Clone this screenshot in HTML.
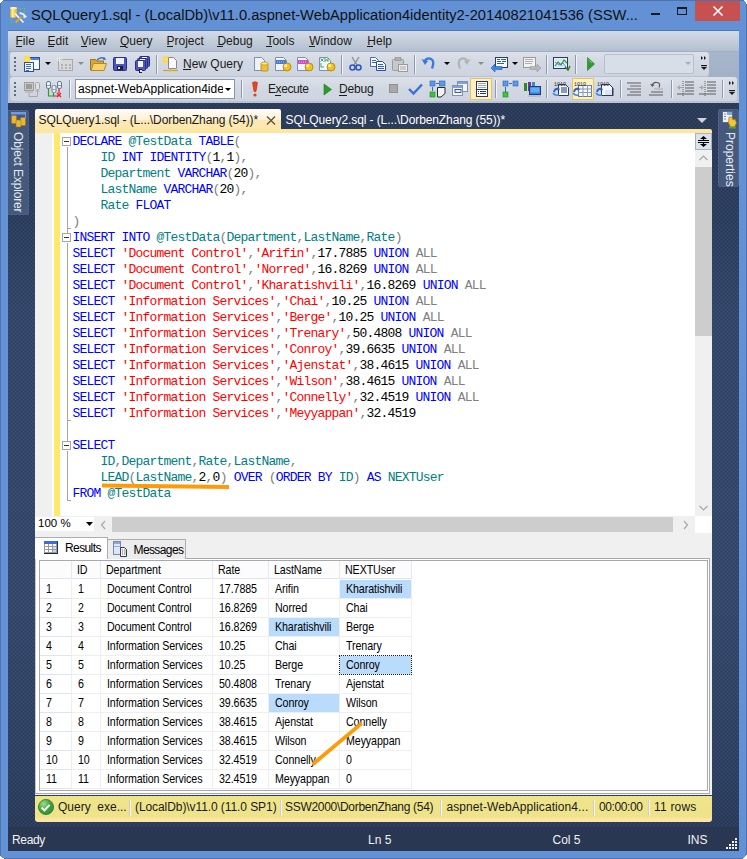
<!DOCTYPE html>
<html><head><meta charset="utf-8"><style>
*{margin:0;padding:0;box-sizing:border-box}
html,body{width:747px;height:859px;overflow:hidden;background:#fff}
body{position:relative;font-family:"Liberation Sans",sans-serif;font-size:12px;color:#000}
.a{position:absolute}
.navy{background-color:#33476B}
.tb{position:absolute;border-radius:3px;background:linear-gradient(#DCE1E9,#D3D9E3 40%,#CDD4E0);box-shadow:0 1px 0 #B9C3D2}
.sep{position:absolute;width:1px;background:#8C97AA;box-shadow:1px 0 0 #EEF1F5}
.grip{position:absolute;width:2px;height:2px;background:#5E6D85;box-shadow:0 4px 0 #5E6D85,0 8px 0 #5E6D85,0 12px 0 #5E6D85}
.txt{position:absolute;white-space:pre;line-height:1}
.code{position:absolute;left:72.5px;font-family:"Liberation Mono",monospace;font-size:13px;letter-spacing:-0.8px;white-space:pre;line-height:16px;height:16px}
.k{color:#0000FF}.i{color:#008080}.g{color:#808080}.s{color:#FF0000}.n{color:#000}
.cell{position:absolute;white-space:pre;font-size:12.4px;letter-spacing:-0.1px;line-height:19px;height:19px;padding-top:0;transform:scaleX(0.86);transform-origin:0 0}
</style></head><body>
<div class="a" style="left:0;top:0;width:747px;height:859px;background:#6391D5;box-shadow:inset 0 0 0 1px #4D72AC"></div>
<svg class="a" style="left:6px;top:3px" width="24" height="24"><defs><linearGradient id="gold" x1="0" x2="1"><stop offset="0" stop-color="#D9A21C"/><stop offset=".35" stop-color="#FFF0A8"/><stop offset="1" stop-color="#E8A90E"/></linearGradient></defs><path d="M4 5q3.5-1.5 7 0v9q-3.5 1.5-7 0z" fill="url(#gold)"/><ellipse cx="7.5" cy="5" rx="3.5" ry="1" fill="#FFF3B8"/><g fill="#5FD33A"><rect x="12" y="5" width="1" height="1"/><rect x="14" y="5" width="1" height="1"/><rect x="16" y="5" width="1" height="1"/><rect x="18" y="5" width="1" height="1"/><rect x="18" y="7" width="1" height="1"/><rect x="18" y="9" width="1" height="1"/><rect x="5" y="15" width="1" height="1"/><rect x="5" y="17" width="1" height="1"/><rect x="5" y="19" width="1" height="1"/><rect x="7" y="19" width="1" height="1"/></g><path d="M9 10.5l8.5 9" stroke="#F4F6FA" stroke-width="1.6"/><path d="M9.5 19.5l6-5.5" stroke="#E9A817" stroke-width="1.8"/><path d="M13.5 10.5q3-1 6 3l-2 1" stroke="#E8ECF2" stroke-width="2" fill="none"/></svg>
<div class="txt" style="left:31px;top:8px;font-size:14.7px;color:#111">SQLQuery1.sql - (LocalDb)\v11.0.aspnet-WebApplication4identity2-20140821041536 (SSW...</div>
<div class="a" style="left:651px;top:13px;width:9px;height:2px;background:#1A1A1A"></div>
<div class="a" style="left:677px;top:7px;width:10px;height:8px;border:1px solid #1A1A1A;border-top-width:2px"></div>
<div class="a" style="left:695px;top:1px;width:45px;height:20px;background:#C75050"></div>
<svg class="a" style="left:711px;top:5px" width="14" height="12"><path d="M2.5 1.5l9 9M11.5 1.5l-9 9" stroke="#fff" stroke-width="1.6"/></svg>
<div class="a" style="left:8px;top:30px;width:731px;height:74px;background:linear-gradient(#ADBACD 0,#A3B1C7 60%,#B9C3D2 90%);border-top:1px solid #4A78C0"></div>
<div class="a" style="left:8px;top:31px;width:731px;height:21px;background:linear-gradient(#D4DBE5,#B3BFD0);border-bottom:1px solid #A3B0C4"></div>
<div class="txt" style="left:15.5px;top:35px;font-size:12px;color:#1B1B1B">File</div>
<div class="a" style="left:15.5px;top:46px;width:6px;height:1px;background:#1B1B1B"></div>
<div class="txt" style="left:47.6px;top:35px;font-size:12px;color:#1B1B1B">Edit</div>
<div class="a" style="left:47.6px;top:46px;width:6px;height:1px;background:#1B1B1B"></div>
<div class="txt" style="left:80.8px;top:35px;font-size:12px;color:#1B1B1B">View</div>
<div class="a" style="left:80.8px;top:46px;width:6px;height:1px;background:#1B1B1B"></div>
<div class="txt" style="left:119.9px;top:35px;font-size:12px;color:#1B1B1B">Query</div>
<div class="a" style="left:119.9px;top:46px;width:6px;height:1px;background:#1B1B1B"></div>
<div class="txt" style="left:166.5px;top:35px;font-size:12px;color:#1B1B1B">Project</div>
<div class="a" style="left:166.5px;top:46px;width:6px;height:1px;background:#1B1B1B"></div>
<div class="txt" style="left:217.4px;top:35px;font-size:12px;color:#1B1B1B">Debug</div>
<div class="a" style="left:217.4px;top:46px;width:6px;height:1px;background:#1B1B1B"></div>
<div class="txt" style="left:266.4px;top:35px;font-size:12px;color:#1B1B1B">Tools</div>
<div class="a" style="left:266.4px;top:46px;width:6px;height:1px;background:#1B1B1B"></div>
<div class="txt" style="left:309.2px;top:35px;font-size:12px;color:#1B1B1B">Window</div>
<div class="a" style="left:309.2px;top:46px;width:6px;height:1px;background:#1B1B1B"></div>
<div class="txt" style="left:367.3px;top:35px;font-size:12px;color:#1B1B1B">Help</div>
<div class="a" style="left:367.3px;top:46px;width:6px;height:1px;background:#1B1B1B"></div>
<div class="tb" style="left:10px;top:52px;width:699px;height:24px"></div>
<div class="grip" style="left:14px;top:57px"></div>
<div class="tb" style="left:10px;top:77px;width:727px;height:24px"></div>
<div class="grip" style="left:14px;top:82px"></div>
<svg class="a" style="left:0;top:0" width="747" height="105"><rect x="26.5" y="57.5" width="13" height="12" fill="#F4F8FF" stroke="#2E4F95"/><rect x="27" y="58" width="12" height="2" fill="#4C84DD"/><circle cx="27" cy="59" r="3.2" fill="#FFD530"/><path d="M23 59h8M27 55v8M24 56l6 6M30 56l-6 6" stroke="#FFE36A" stroke-width=".9"/><rect x="24.5" y="62.5" width="9" height="9" fill="#F2F6FD" stroke="#2E4F95"/><path d="M26 64.5h5M26 66.5h5M26 68.5h5M26 70.5h3" stroke="#3E6CCB"/><path d="M45 62h6l-3 3z" fill="#000"/><rect x="58.5" y="59.5" width="14" height="11" fill="#D8D8D8" stroke="#A9A9A9"/><path d="M61 65h2M65 65h2M69 65h2M61 68h2M65 68h2M69 68h2" stroke="#8C8C8C"/><path d="M56 59h7M59.5 55.5v7M57 57l5 5M62 57l-5 5" stroke="#E6E6E6" stroke-width=".9"/><path d="M78 62h6l-3 3z" fill="#8C8C8C"/><path d="M90.5 59.5h5l1 1.5h7v9h-13z" fill="#D7A63A" stroke="#9C7420"/><path d="M91 70.5l2.5-7h13l-2.5 7z" fill="#F7D36A" stroke="#B08A2A"/><path d="M97 60q4-4 8-1" stroke="#3A6BC8" stroke-width="1.3" fill="none"/><path d="M104 57l2 2.5-3 .8z" fill="#3A6BC8"/><rect x="113.5" y="57.5" width="13" height="13" rx="1" fill="#4D56BE" stroke="#2B2F80"/><rect x="116" y="58" width="8" height="6" fill="#F1F3FA"/><rect x="117" y="66" width="6" height="4" fill="#1E1E3A"/><rect x="118" y="67" width="2" height="2" fill="#E8E8F0"/><rect x="139.5" y="56.5" width="10" height="10" rx="1" fill="#4D56BE" stroke="#2B2F80"/><rect x="142" y="57" width="5" height="6" fill="#F1F3FA"/><rect x="143" y="65" width="3" height="4" fill="#1E1E3A"/><rect x="144" y="66" width="2" height="2" fill="#E8E8F0"/><rect x="137.5" y="58.5" width="10" height="10" rx="1" fill="#4D56BE" stroke="#2B2F80"/><rect x="140" y="59" width="5" height="6" fill="#F1F3FA"/><rect x="141" y="67" width="3" height="4" fill="#1E1E3A"/><rect x="142" y="68" width="2" height="2" fill="#E8E8F0"/><rect x="135.5" y="60.5" width="10" height="10" rx="1" fill="#4D56BE" stroke="#2B2F80"/><rect x="138" y="61" width="5" height="6" fill="#F1F3FA"/><rect x="139" y="69" width="3" height="4" fill="#1E1E3A"/><rect x="140" y="70" width="2" height="2" fill="#E8E8F0"/><rect x="156" y="55" width="1" height="19" fill="#8E99AC"/><rect x="157" y="55" width="1" height="19" fill="#F2F4F8"/><circle cx="166" cy="59.5" r="3.3" fill="#FFCF2E"/><path d="M161.5 59.5h9M166 55v9M163 56.5l6 6M169 56.5l-6 6" stroke="#FFE27A" stroke-width=".9"/><path d="M168.5 57.5h5l3 3v8h-8z" fill="#FAFAFA" stroke="#8A8A8A"/><path d="M163 70.5h15" stroke="#D4A020" stroke-width="1.2"/><path d="M170.5 68v3" stroke="#D4A020"/><circle cx="170.5" cy="70.5" r="1.3" fill="#E8B830"/><path d="M254.5 57.5h7l3 3v10h-10z" fill="#EEF2FA" stroke="#7F8FB0"/><rect x="261" y="63" width="7" height="8" rx="1" fill="#F0C030" stroke="#B08618" stroke-width=".8"/><ellipse cx="264.5" cy="63.5" rx="3.5" ry="1.5" fill="#FFE680" stroke="#B08618" stroke-width=".6"/><path d="M275.5 57.5h8l3 3v10h-11z" fill="#F2F5FB" stroke="#7F8FB0"/><rect x="276" y="60" width="10" height="4" fill="#2A63C6" opacity=".85"/><path d="M277 62h8" stroke="#fff" stroke-width=".6" stroke-dasharray="1 1"/><circle cx="287" cy="67" r="4" fill="#F2C21A" stroke="#A8810A" stroke-width=".8"/><circle cx="285.8" cy="65.7" r="1.6" fill="#FFF2A0"/><path d="M297.5 57.5h8l3 3v10h-11z" fill="#F2F5FB" stroke="#7F8FB0"/><rect x="298" y="60" width="10" height="4" fill="#C030B8" opacity=".85"/><path d="M299 62h8" stroke="#fff" stroke-width=".6" stroke-dasharray="1 1"/><circle cx="309" cy="67" r="4" fill="#F2C21A" stroke="#A8810A" stroke-width=".8"/><circle cx="307.8" cy="65.7" r="1.6" fill="#FFF2A0"/><path d="M319.5 57.5h8l3 3v10h-11z" fill="#F2F5FB" stroke="#7F8FB0"/><path d="M320.5 58.5l3 3M323.5 58.5l-3 3M325 58v3.5l1.5-2 1.5 2V58M321 63v4h3" stroke="#2AA050" stroke-width=".9" fill="none"/><circle cx="331" cy="67" r="4" fill="#F2C21A" stroke="#A8810A" stroke-width=".8"/><circle cx="329.8" cy="65.7" r="1.6" fill="#FFF2A0"/><rect x="341" y="55" width="1" height="19" fill="#8E99AC"/><rect x="342" y="55" width="1" height="19" fill="#F2F4F8"/><path d="M352 57l5 8M359 57l-5 8" stroke="#8F8F8F" stroke-width="1.4"/><circle cx="352.5" cy="67.5" r="2.5" fill="none" stroke="#2C55C8" stroke-width="1.6"/><circle cx="358.5" cy="67.5" r="2.5" fill="none" stroke="#2C55C8" stroke-width="1.6"/><path d="M370.5 57.5h5l3 3v6h-8z" fill="#F8FAFE" stroke="#4C6AB8"/><path d="M372 60.5h4M372 62.5h4" stroke="#3A62C0"/><path d="M376.5 61.5h6l3 3v6h-9z" fill="#F8FAFE" stroke="#2E4F95"/><path d="M378 64.5h5M378 66.5h6M378 68.5h6" stroke="#2E5CC8"/><rect x="392.5" y="59.5" width="11" height="11" rx="1" fill="#C8C8C8" stroke="#9A9A9A"/><rect x="395" y="57.5" width="6" height="3" fill="#B0B0B0" stroke="#8C8C8C" stroke-width=".6"/><rect x="398.5" y="64.5" width="9" height="7" fill="#EDEDED" stroke="#9A9A9A"/><path d="M400 67h6M400 69h6" stroke="#A8A8A8"/><rect x="414" y="55" width="1" height="19" fill="#8E99AC"/><rect x="415" y="55" width="1" height="19" fill="#F2F4F8"/><path d="M424 62q3-5 7-3t1 9.5" stroke="#3C78DC" stroke-width="2.3" fill="none"/><path d="M421.5 59l3.5 6 3-4z" fill="#3C78DC"/><path d="M444 62h6l-3 3z" fill="#000"/><path d="M468 62q-3-5-7-3t-1 9.5" stroke="#B4B4B4" stroke-width="2.3" fill="none"/><path d="M470.5 59l-3.5 6-3-4z" fill="#B4B4B4"/><path d="M478 62h6l-3 3z" fill="#8C8C8C"/><rect x="495.5" y="57.5" width="12" height="10" fill="#FAFBFD" stroke="#2A3A6A"/><path d="M497 59.5h3M501 59.5h5M497 61.5h4M502 61.5h4M497 63.5h7" stroke="#2A5CC8"/><path d="M491 68l4-4v2.5h7v3h-7v2.5z" fill="#3A8AE0" stroke="#2458B0" stroke-width=".6"/><path d="M512 62h6l-3 3z" fill="#000"/><rect x="523.5" y="57.5" width="12" height="10" fill="#F2F2F2" stroke="#9A9A9A"/><path d="M525 59.5h8M525 61.5h8M525 63.5h7" stroke="#B0B0B0"/><path d="M541 68l-4-4v2.5h-7v3h7v2.5z" fill="#B8B8B8" stroke="#9A9A9A" stroke-width=".6"/><rect x="546" y="55" width="1" height="19" fill="#8E99AC"/><rect x="547" y="55" width="1" height="19" fill="#F2F4F8"/><rect x="553.5" y="57.5" width="14" height="11" fill="#E8F2FA" stroke="#2A3A6A"/><path d="M555 60h11M555 63h11M555 66h11" stroke="#B6C8E0" stroke-width=".6"/><path d="M555 66l3-4 3 3 3-5 3 3" stroke="#3A9A30" stroke-width="1.2" fill="none"/><path d="M555 62l4 3 4-2 3 4" stroke="#4A7CE0" stroke-width=".9" fill="none"/><path d="M565 67l3 3 2-4" stroke="#2A8020" stroke-width="1.5" fill="none"/><rect x="575" y="55" width="1" height="19" fill="#8E99AC"/><rect x="576" y="55" width="1" height="19" fill="#F2F4F8"/><path d="M587.5 57.5l7 6.5-7 6.5z" fill="#2E9A2E" stroke="#1E7A1E" stroke-width=".6"/><path d="M588.5 60l3.5 3" stroke="#7ED07E"/><rect x="604.5" y="54.5" width="89" height="19" rx="1.5" fill="#D8DEE7" stroke="#B7C0CD"/><path d="M685 62h6l-3 3z" fill="#A3ABB8"/><path d="M701 56l2 2-2 2zM704 56l2 2-2 2z" fill="#1A1A1A"/><rect x="701" y="65" width="6" height="1.2" fill="#1A1A1A"/><path d="M701 67h6l-3 3z" fill="#1A1A1A"/><rect x="24.5" y="82.5" width="9" height="8" fill="#C9C9C9" stroke="#A0A0A0"/><rect x="26" y="84" width="6" height="5" fill="#9C9C9C"/><rect x="25" y="91" width="8" height="2" fill="#BDBDBD"/><rect x="35.5" y="82.5" width="4" height="7" rx="1" fill="#E0E0E0" stroke="#A8A8A8"/><path d="M29 93v3.5h8.5v-6" stroke="#A8A8A8" fill="none"/><path d="M35.5 92l2-2 2 2" stroke="#A8A8A8" fill="none"/><rect x="46.5" y="81.5" width="4" height="7" rx="1.5" fill="#EEF2F8" stroke="#6C7A90"/><rect x="47" y="85" width="3" height="1" fill="#8A9ABA"/><rect x="52.0" y="85.5" width="4" height="7" rx="1.5" fill="#EEF2F8" stroke="#6C7A90"/><rect x="52.5" y="89" width="3" height="1" fill="#8A9ABA"/><rect x="57.5" y="81.5" width="4" height="7" rx="1.5" fill="#EEF2F8" stroke="#6C7A90"/><rect x="58" y="85" width="3" height="1" fill="#8A9ABA"/><path d="M48.5 89v7h5v-3" stroke="#2AA020" stroke-width="1.2" fill="none"/><path d="M53.5 96h4M59 89v4" stroke="#E02020" stroke-width="1.2"/><path d="M57 93l4 4M61 93l-4 4" stroke="#F02020" stroke-width="1.4"/><rect x="69" y="80" width="1" height="18" fill="#8E99AC"/><rect x="70" y="80" width="1" height="18" fill="#F2F4F8"/><rect x="75.5" y="79.5" width="159" height="19" fill="#FFFFFF" stroke="#8995AB"/><path d="M225 88h6l-3 3z" fill="#000"/><rect x="241" y="80" width="1" height="18" fill="#8E99AC"/><rect x="242" y="80" width="1" height="18" fill="#F2F4F8"/><path d="M252.5 82.5q2.5-1.5 5 0l-1.5 9h-2z" fill="#E8461C" stroke="#B82A10" stroke-width=".6"/><circle cx="255" cy="95" r="1.6" fill="#E0401A"/><path d="M324 84l7.5 5.5-7.5 5.5z" fill="#2E9A2E" stroke="#1E7A1E" stroke-width=".6"/><rect x="389.5" y="84.5" width="8" height="8" fill="#A9A9A9" stroke="#909090"/><path d="M409 89l4.5 4.5 8.5-9" stroke="#3C6ED6" stroke-width="2.4" fill="none"/><rect x="430" y="81" width="5" height="5" fill="#5A9AE8" stroke="#2A62B8" stroke-width=".6"/><rect x="439.5" y="81" width="5.5" height="5" fill="#5A9AE8" stroke="#2A62B8" stroke-width=".6"/><path d="M436 83.5h3M432.5 87v4" stroke="#3A6AB8"/><rect x="430" y="92" width="5" height="5" fill="#3CC23C" stroke="#1E8A1E" stroke-width=".6"/><path d="M437.5 87.5h7.5v6l-4 3.5h-3.5z" fill="#F4F4F4" stroke="#2A2A2A"/><rect x="457.5" y="81.5" width="10" height="10" fill="#F2F5FA" stroke="#8092B8"/><rect x="458" y="82" width="9" height="2" fill="#7FA3DA"/><rect x="452.5" y="85.5" width="10" height="10" fill="#F2F5FA" stroke="#8092B8"/><rect x="453" y="86" width="9" height="2" fill="#7FA3DA"/><rect x="455" y="89.5" width="6" height="3" fill="#E6ECF6" stroke="#2A3A6A" stroke-width=".8"/><rect x="470.5" y="78.5" width="21" height="21" fill="#FFF0C4" stroke="#E5C466"/><rect x="476.5" y="81.5" width="11" height="15" fill="#FAFBFD" stroke="#2A3A5A"/><path d="M478 83.5h8M478 85.5h8M478 87.5h8" stroke="#9AA6BC"/><path d="M477 89.5h10" stroke="#2A3A5A"/><path d="M478 91.5h1M478 93.5h1M480 91.5h6M480 93.5h6" stroke="#2A3A5A"/><rect x="495" y="80" width="1" height="18" fill="#8E99AC"/><rect x="496" y="80" width="1" height="18" fill="#F2F4F8"/><rect x="503" y="81" width="5" height="5" fill="#5A9AE8" stroke="#2A62B8" stroke-width=".6"/><rect x="513" y="81" width="5" height="5" fill="#5A9AE8" stroke="#2A62B8" stroke-width=".6"/><path d="M509 83.5h3M505.5 87v5" stroke="#3A6AB8"/><rect x="503" y="92" width="5" height="5" fill="#3CC23C" stroke="#1E8A1E" stroke-width=".6"/><rect x="524" y="83" width="3" height="8" fill="#2A8A2A"/><rect x="528" y="82" width="3" height="9" fill="#6A3A9A"/><rect x="532" y="82" width="3" height="9" fill="#3A8AC8"/><rect x="529.5" y="86.5" width="11" height="8" fill="#3C7AE0" stroke="#2A3A6A"/><rect x="530.5" y="87.5" width="9" height="5" fill="#5AB0F8"/><rect x="528" y="95" width="13" height="2" fill="#B8C0D0"/><rect x="546" y="80" width="1" height="18" fill="#8E99AC"/><rect x="547" y="80" width="1" height="18" fill="#F2F4F8"/><path d="M558.5 84.5h7l3 3v8h-10z" fill="#F6F8FC" stroke="#2A3A6A"/><path d="M561 88h6M561 90h6M561 92h6" stroke="#2A3A6A"/><text x="554" y="86" font-family="Liberation Mono" font-size="5" fill="#2A2A2A">1010</text><path d="M554 92q1-4 5-3" stroke="#2A62C8" stroke-width="2" fill="none"/><path d="M558 87l2 2.5-3 1z" fill="#2A62C8"/><path d="M553 93q2 3 6 2" stroke="#3A8AE0" stroke-width="1.6" fill="none"/><rect x="572.5" y="78.5" width="21" height="21" fill="#FFF0C4" stroke="#E5C466"/><rect x="578.5" y="85.5" width="13" height="11" fill="#F6F8FC" stroke="#6A7A9A"/><path d="M578 89h14M578 92.5h14M583 85v12M587.5 85v12" stroke="#8A9ABA"/><text x="574" y="86" font-family="Liberation Mono" font-size="5" fill="#2A2A2A">1010</text><path d="M574 92q1-4 5-3" stroke="#2A62C8" stroke-width="2" fill="none"/><path d="M578 87l2 2.5-3 1z" fill="#2A62C8"/><path d="M573 93q2 3 6 2" stroke="#3A8AE0" stroke-width="1.6" fill="none"/><path d="M601.5 84.5h8l3 3v8h-11z" fill="#F6F8FC" stroke="#2A3A6A"/><path d="M609 84l4 4v8" fill="none" stroke="#2A3A6A"/><rect x="605" y="90" width="7" height="5" fill="#DDE4F0"/><text x="597" y="86" font-family="Liberation Mono" font-size="5" fill="#2A2A2A">1010</text><path d="M597 92q1-4 5-3" stroke="#2A62C8" stroke-width="2" fill="none"/><path d="M601 87l2 2.5-3 1z" fill="#2A62C8"/><path d="M596 93q2 3 6 2" stroke="#3A8AE0" stroke-width="1.6" fill="none"/><rect x="620" y="80" width="1" height="18" fill="#8E99AC"/><rect x="621" y="80" width="1" height="18" fill="#F2F4F8"/><path d="M627 83h14M630 86h11M627 89h14M630 92h11M627 95h14" stroke="#5C5C5C"/><path d="M630 86h11M630 89h8" stroke="#A8A8A8"/><path d="M652 86q1-4 5-3.5t2 5" stroke="#5C5C5C" stroke-width="1.2" fill="none"/><path d="M650 84l2.5 3 2-2.5z" fill="#5C5C5C"/><path d="M651 92h12M649 95h14" stroke="#5C5C5C"/><path d="M654 89h9" stroke="#A8A8A8"/><rect x="671" y="80" width="1" height="18" fill="#8E99AC"/><rect x="672" y="80" width="1" height="18" fill="#F2F4F8"/><path d="M685 82h9M685 85h9M685 88h9M685 91h9M677 94h17" stroke="#5C5C5C" stroke-width="1.2"/><path d="M683 81v16" stroke="#5C5C5C" stroke-dasharray="1 1"/><path d="M677 87.5l3-2.5v5z" fill="#A8A8A8"/><path d="M679 87.5h4" stroke="#A8A8A8"/><path d="M707 82h9M707 85h9M707 88h9M707 91h9M699 94h17" stroke="#5C5C5C" stroke-width="1.2"/><path d="M705 81v16" stroke="#5C5C5C" stroke-dasharray="1 1"/><path d="M704 87.5l-3-2.5v5z" fill="#A8A8A8"/><path d="M699 87.5h3" stroke="#A8A8A8"/><rect x="722" y="80" width="1" height="18" fill="#8E99AC"/><rect x="723" y="80" width="1" height="18" fill="#F2F4F8"/><path d="M729 81l2 2-2 2zM732 81l2 2-2 2z" fill="#1A1A1A"/><rect x="729" y="90" width="6" height="1.2" fill="#1A1A1A"/><path d="M729 92h6l-3 3z" fill="#1A1A1A"/></svg>
<div class="txt" style="left:183px;top:58px;font-size:12px;color:#1B1B1B">New Query</div><div class="a" style="left:183px;top:69px;width:8px;height:1px;background:#1B1B1B"></div>
<div class="txt" style="left:78px;top:83px;font-size:12px;color:#000;width:145px;overflow:hidden">aspnet-WebApplication4ide</div>
<div class="txt" style="left:268px;top:83px;font-size:12px;color:#1B1B1B;letter-spacing:-0.4px">Execute</div><div class="a" style="left:275px;top:95px;width:6px;height:1px;background:#1B1B1B"></div>
<div class="txt" style="left:339px;top:83px;font-size:12px;color:#1B1B1B;letter-spacing:-0.2px">Debug</div><div class="a" style="left:339px;top:95px;width:8px;height:1px;background:#1B1B1B"></div>
<div class="a" style="left:8px;top:103px;width:731px;height:748px;background:linear-gradient(#2B3B59 0,#2D3F5F 16%,#34486B 29%,#35496C 68%,#2F4264 88%,#2A3A58 100%)"></div>
<svg class="a" style="left:8px;top:103px" width="731" height="748"><defs><pattern id="dots" width="4" height="4" patternUnits="userSpaceOnUse"><rect x="1" y="0" width="1" height="1" fill="#1C2740" fill-opacity=".45"/><rect x="3" y="2" width="1" height="1" fill="#1C2740" fill-opacity=".45"/><rect x="3" y="0" width="1" height="1" fill="#5A6E94" fill-opacity=".18"/><rect x="1" y="2" width="1" height="1" fill="#5A6E94" fill-opacity=".18"/></pattern></defs><rect width="731" height="748" fill="url(#dots)"/></svg>
<div class="a" style="left:8px;top:110px;width:21px;height:105px;background:#45597D;border:1px solid #4C6086;border-left:none;border-radius:0 2px 2px 0"></div>
<svg class="a" style="left:10px;top:111px" width="17" height="17"><rect x="1" y="1" width="15" height="2.5" fill="#6E9BE8"/><rect x="15" y="1" width="1" height="6" fill="#6E9BE8"/><g fill="#E7B63A" stroke="#A57A14" stroke-width=".6"><rect x="1.5" y="4.5" width="5" height="8" rx="1"/><rect x="10.5" y="6.5" width="5" height="8" rx="1"/><rect x="6" y="9" width="5" height="7" rx="1"/></g></svg>
<div class="txt" style="left:24px;top:132px;font-size:12px;letter-spacing:-0.15px;color:#E6EBF2;transform-origin:0 0;transform:rotate(90deg)">Object Explorer</div>
<div class="a" style="left:718px;top:109px;width:21px;height:78px;background:#46597D;border:1px solid #4E6288;border-radius:2px"></div>
<svg class="a" style="left:722px;top:111px" width="15" height="18"><rect x=".5" y=".5" width="10" height="11" fill="#EEF2FA" stroke="#5A6A8A"/><rect x="5" y="1" width="5" height="3" fill="#7FA8E8"/><path d="M2 3h2M2 5.5h2M2 8h2" stroke="#7A8AAA"/><path d="M7 6l3 0 1 3 2-1 1.5 4-2 4h-4l-2-4z" fill="#F5C430" stroke="#A07810" stroke-width=".6"/><rect x="7" y="15.5" width="7" height="2" fill="#4EA040"/></svg>
<div class="txt" style="left:736px;top:131.5px;font-size:12px;color:#E6EBF2;transform-origin:0 0;transform:rotate(90deg)">Properties</div>
<div class="a" style="left:35px;top:109px;width:246px;height:24px;background:linear-gradient(#FFFCF4 0,#FDF1D8 11px,#FDE8B2 11px,#FDE7AE 100%);border-radius:2px 2px 0 0"></div>
<div class="txt" style="left:38.6px;top:114px;font-size:12px;letter-spacing:-0.1px;color:#1A1A1A">SQLQuery1.sql - (L...\DorbenZhang (54))*</div>
<svg class="a" style="left:266px;top:116px" width="10" height="9"><path d="M1 0.5l8 8M9 0.5l-8 8" stroke="#5A4F3A" stroke-width="1.3"/></svg>
<div class="txt" style="left:285.6px;top:114px;font-size:12px;letter-spacing:-0.1px;color:#FFFFFF">SQLQuery2.sql - (L...\DorbenZhang (55))*</div>
<svg class="a" style="left:697px;top:118px" width="10" height="6"><path d="M0 0h10L5 5z" fill="#CDD3DE"/></svg>
<div class="a" style="left:35px;top:129px;width:677px;height:4px;background:#FDE7A0;border-radius:0 2px 0 0"></div>
<div class="a" style="left:35px;top:133px;width:677px;height:400px;background:#FFFFFF"></div>
<div class="a" style="left:35px;top:133px;width:17px;height:383px;background:#F0F0F0"></div>
<div class="a" style="left:54px;top:133px;width:6px;height:383px;background:#FFE96A"></div>
<div class="a" style="left:62px;top:137px;width:9px;height:9px;border:1px solid #A5A5A5;background:#fff"></div>
<div class="a" style="left:64px;top:141px;width:5px;height:1px;background:#333"></div>
<div class="a" style="left:67px;top:147px;width:1px;height:82px;background:#A5A5A5"></div>
<div class="a" style="left:67px;top:228px;width:4px;height:1px;background:#A5A5A5"></div>
<div class="a" style="left:67px;top:229px;width:1px;height:4px;background:#A5A5A5"></div>
<div class="a" style="left:62px;top:233px;width:9px;height:9px;border:1px solid #A5A5A5;background:#fff"></div>
<div class="a" style="left:64px;top:237px;width:5px;height:1px;background:#333"></div>
<div class="a" style="left:67px;top:243px;width:1px;height:178px;background:#A5A5A5"></div>
<div class="a" style="left:67px;top:420px;width:4px;height:1px;background:#A5A5A5"></div>
<div class="a" style="left:67px;top:421px;width:1px;height:20px;background:#A5A5A5"></div>
<div class="a" style="left:62px;top:441px;width:9px;height:9px;border:1px solid #A5A5A5;background:#fff"></div>
<div class="a" style="left:64px;top:445px;width:5px;height:1px;background:#333"></div>
<div class="a" style="left:67px;top:451px;width:1px;height:50px;background:#A5A5A5"></div>
<div class="a" style="left:67px;top:500px;width:4px;height:1px;background:#A5A5A5"></div>
<div class="code" style="top:134px"><span class="k">DECLARE </span><span class="i">@TestData </span><span class="k">TABLE</span><span class="g">(</span></div>
<div class="code" style="top:150px"><span class="n">    </span><span class="i">ID </span><span class="k">INT IDENTITY</span><span class="g">(</span><span class="n">1</span><span class="g">,</span><span class="n">1</span><span class="g">),</span></div>
<div class="code" style="top:166px"><span class="n">    </span><span class="i">Department </span><span class="k">VARCHAR</span><span class="g">(</span><span class="n">20</span><span class="g">),</span></div>
<div class="code" style="top:182px"><span class="n">    </span><span class="i">LastName </span><span class="k">VARCHAR</span><span class="g">(</span><span class="n">20</span><span class="g">),</span></div>
<div class="code" style="top:198px"><span class="n">    </span><span class="i">Rate </span><span class="k">FLOAT</span></div>
<div class="code" style="top:214px"><span class="g">)</span></div>
<div class="code" style="top:230px"><span class="k">INSERT INTO </span><span class="i">@TestData</span><span class="g">(</span><span class="i">Department</span><span class="g">,</span><span class="i">LastName</span><span class="g">,</span><span class="i">Rate</span><span class="g">)</span></div>
<div class="code" style="top:246px"><span class="k">SELECT </span><span class="s">'Document Control'</span><span class="g">,</span><span class="s">'Arifin'</span><span class="g">,</span><span class="n">17.7885</span><span class="k"> UNION </span><span class="g">ALL</span></div>
<div class="code" style="top:262px"><span class="k">SELECT </span><span class="s">'Document Control'</span><span class="g">,</span><span class="s">'Norred'</span><span class="g">,</span><span class="n">16.8269</span><span class="k"> UNION </span><span class="g">ALL</span></div>
<div class="code" style="top:278px"><span class="k">SELECT </span><span class="s">'Document Control'</span><span class="g">,</span><span class="s">'Kharatishvili'</span><span class="g">,</span><span class="n">16.8269</span><span class="k"> UNION </span><span class="g">ALL</span></div>
<div class="code" style="top:294px"><span class="k">SELECT </span><span class="s">'Information Services'</span><span class="g">,</span><span class="s">'Chai'</span><span class="g">,</span><span class="n">10.25</span><span class="k"> UNION </span><span class="g">ALL</span></div>
<div class="code" style="top:310px"><span class="k">SELECT </span><span class="s">'Information Services'</span><span class="g">,</span><span class="s">'Berge'</span><span class="g">,</span><span class="n">10.25</span><span class="k"> UNION </span><span class="g">ALL</span></div>
<div class="code" style="top:326px"><span class="k">SELECT </span><span class="s">'Information Services'</span><span class="g">,</span><span class="s">'Trenary'</span><span class="g">,</span><span class="n">50.4808</span><span class="k"> UNION </span><span class="g">ALL</span></div>
<div class="code" style="top:342px"><span class="k">SELECT </span><span class="s">'Information Services'</span><span class="g">,</span><span class="s">'Conroy'</span><span class="g">,</span><span class="n">39.6635</span><span class="k"> UNION </span><span class="g">ALL</span></div>
<div class="code" style="top:358px"><span class="k">SELECT </span><span class="s">'Information Services'</span><span class="g">,</span><span class="s">'Ajenstat'</span><span class="g">,</span><span class="n">38.4615</span><span class="k"> UNION </span><span class="g">ALL</span></div>
<div class="code" style="top:374px"><span class="k">SELECT </span><span class="s">'Information Services'</span><span class="g">,</span><span class="s">'Wilson'</span><span class="g">,</span><span class="n">38.4615</span><span class="k"> UNION </span><span class="g">ALL</span></div>
<div class="code" style="top:390px"><span class="k">SELECT </span><span class="s">'Information Services'</span><span class="g">,</span><span class="s">'Connelly'</span><span class="g">,</span><span class="n">32.4519</span><span class="k"> UNION </span><span class="g">ALL</span></div>
<div class="code" style="top:406px"><span class="k">SELECT </span><span class="s">'Information Services'</span><span class="g">,</span><span class="s">'Meyyappan'</span><span class="g">,</span><span class="n">32.4519</span></div>
<div class="code" style="top:438px"><span class="k">SELECT</span></div>
<div class="code" style="top:454px"><span class="n">    </span><span class="i">ID</span><span class="g">,</span><span class="i">Department</span><span class="g">,</span><span class="i">Rate</span><span class="g">,</span><span class="i">LastName</span><span class="g">,</span></div>
<div class="code" style="top:470px"><span class="n">    </span><span class="i">LEAD</span><span class="g">(</span><span class="i">LastName</span><span class="g">,</span><span class="n">2</span><span class="g">,</span><span class="n">0</span><span class="g">) </span><span class="k">OVER </span><span class="g">(</span><span class="k">ORDER BY </span><span class="i">ID</span><span class="g">) </span><span class="k">AS </span><span class="i">NEXTUser</span></div>
<div class="code" style="top:486px"><span class="k">FROM </span><span class="i">@TestData</span></div>
<svg class="a" style="left:98px;top:480px" width="136" height="12"><path d="M4 5.4 L131 7" stroke="#FF9A08" stroke-width="4" fill="none" stroke-linecap="butt"/></svg>
<div class="a" style="left:695px;top:133px;width:17px;height:383px;background:#F0F0F0"></div>
<div class="a" style="left:695px;top:133px;width:17px;height:17px;background:#DCE2EB;border:1px solid #A7B3C6"></div>
<svg class="a" style="left:697px;top:135px" width="13" height="13"><path d="M6.5 1L3 4h7z M6.5 12L3 9h7z" fill="#000"/><path d="M6.5 3v2M6.5 8v2" stroke="#000" stroke-width="1.2"/><path d="M1 5.5h11M1 7.5h11" stroke="#000" stroke-width="1"/></svg>
<svg class="a" style="left:698px;top:154px" width="11" height="8"><path d="M1.5 6L5.5 2L9.5 6" stroke="#A8A8A8" stroke-width="1.2" fill="none"/></svg>
<div class="a" style="left:695px;top:167px;width:17px;height:169px;background:#CDCDCD"></div>
<svg class="a" style="left:698px;top:504px" width="11" height="8"><path d="M1.5 2L5.5 6L9.5 2" stroke="#A8A8A8" stroke-width="1.2" fill="none"/></svg>
<div class="a" style="left:35px;top:516px;width:677px;height:17px;background:#F0F0F0"></div>
<div class="a" style="left:35px;top:517px;width:59px;height:14px;background:#FFFFFF"></div>
<div class="txt" style="left:38px;top:518px;font-size:11.5px;color:#000">100 %</div>
<svg class="a" style="left:86px;top:522px" width="7" height="4"><path d="M0 0h7L3.5 4z" fill="#000"/></svg>
<svg class="a" style="left:100px;top:520px" width="6" height="10"><path d="M5 1L1.5 5L5 9" stroke="#A8A8A8" stroke-width="1.2" fill="none"/></svg>
<div class="a" style="left:112px;top:517px;width:561px;height:15px;background:#CDCDCD"></div>
<svg class="a" style="left:683px;top:520px" width="6" height="10"><path d="M1 1L4.5 5L1 9" stroke="#A8A8A8" stroke-width="1.2" fill="none"/></svg>
<div class="a" style="left:695px;top:516px;width:17px;height:17px;background:#FFFFFF"></div>
<div class="a" style="left:35px;top:533px;width:677px;height:262px;background:#F0F0F0"></div>
<div class="a" style="left:35px;top:558px;width:675px;height:236px;background:#FFFFFF;border:1px solid #A7A9AE;border-left-color:#C8C8C8"></div>
<div class="a" style="left:107px;top:539px;width:79px;height:20px;background:#ECECEC;border:1px solid #ADADAD;border-bottom:none"></div>
<div class="a" style="left:35px;top:537px;width:73px;height:22px;background:#FFFFFF;border:1px solid #ADADAD;border-bottom:none;border-left:none"></div>
<div class="txt" style="left:65px;top:542px;font-size:12px;letter-spacing:-0.6px">Results</div>
<div class="txt" style="left:133.5px;top:544px;font-size:12px;letter-spacing:-0.6px">Messages</div>
<svg class="a" style="left:44px;top:541px" width="14" height="13"><rect x="0" y="0" width="14" height="13" fill="#9A9A9A"/><rect x="0" y="0" width="14" height="3" fill="#3B6FD6"/><rect x="13" y="0" width="1" height="13" fill="#2A2A8A"/><rect x="0" y="12" width="14" height="1" fill="#2A2A2A"/><g fill="#FFFFFF"><rect x="1" y="3" width="3" height="2"/><rect x="5" y="3" width="3" height="2"/><rect x="9" y="3" width="3" height="2"/><rect x="1" y="6" width="3" height="2"/><rect x="5" y="6" width="3" height="2"/><rect x="9" y="6" width="3" height="2" fill="#CFE6FA"/><rect x="1" y="9" width="3" height="2"/><rect x="5" y="9" width="3" height="2"/><rect x="9" y="9" width="3" height="2" fill="#B8DAF8"/></g></svg>
<svg class="a" style="left:112px;top:541px" width="17" height="17"><rect x="1.5" y=".5" width="7" height="13" fill="#DDE6F4" stroke="#7C8AA6"/><rect x="2" y="1" width="6" height="2" fill="#8AA8D8"/><rect x="2" y="5" width="6" height="1" fill="#9AB0D0"/><path d="M8.5 6.5h4l2 2v7h-6z" fill="#F6F6F6" stroke="#2A3A6A"/><path d="M10 9h1M10 11h1M10 13h1" stroke="#E04030"/><path d="M12 9h1.5M12 11h1.5M12 13h1.5" stroke="#40A040"/></svg>
<div class="a" style="left:39px;top:560px;width:669px;height:231px;background:#FFFFFF;border:1px solid #A7A9AE"></div>
<div class="a" style="left:40px;top:561px;width:32px;height:18px;background:#FCFCFD;border-right:1px solid #E3E9F2;border-bottom:1px solid #DCE4EF"></div>
<div class="a" style="left:72px;top:561px;width:29px;height:18px;background:#FCFCFD;border-right:1px solid #E3E9F2;border-bottom:1px solid #DCE4EF"></div>
<div class="cell" style="left:77px;top:561px;line-height:18px">ID</div>
<div class="a" style="left:101px;top:561px;width:112px;height:18px;background:#FCFCFD;border-right:1px solid #E3E9F2;border-bottom:1px solid #DCE4EF"></div>
<div class="cell" style="left:106px;top:561px;line-height:18px">Department</div>
<div class="a" style="left:213px;top:561px;width:56px;height:18px;background:#FCFCFD;border-right:1px solid #E3E9F2;border-bottom:1px solid #DCE4EF"></div>
<div class="cell" style="left:218px;top:561px;line-height:18px">Rate</div>
<div class="a" style="left:269px;top:561px;width:71px;height:18px;background:#FCFCFD;border-right:1px solid #E3E9F2;border-bottom:1px solid #DCE4EF"></div>
<div class="cell" style="left:274px;top:561px;line-height:18px">LastName</div>
<div class="a" style="left:340px;top:561px;width:72px;height:18px;background:#FCFCFD;border-right:1px solid #E3E9F2;border-bottom:1px solid #DCE4EF"></div>
<div class="cell" style="left:345px;top:561px;line-height:18px">NEXTUser</div>
<div class="a" style="left:40px;top:580px;width:32px;height:19px;background:#FFFFFF;border-right:1px solid #EFEFEF;border-bottom:1px solid #DCE4EF"></div>
<div class="cell" style="left:46px;top:580px">1</div>
<div class="a" style="left:72px;top:580px;width:29px;height:19px;background:#FFFFFF;border-right:1px solid #EFEFEF;border-bottom:1px solid #EFEFEF"></div>
<div class="cell" style="left:78px;top:580px">1</div>
<div class="a" style="left:101px;top:580px;width:112px;height:19px;background:#FFFFFF;border-right:1px solid #EFEFEF;border-bottom:1px solid #EFEFEF"></div>
<div class="cell" style="left:107px;top:580px">Document Control</div>
<div class="a" style="left:213px;top:580px;width:56px;height:19px;background:#FFFFFF;border-right:1px solid #EFEFEF;border-bottom:1px solid #EFEFEF"></div>
<div class="cell" style="left:219px;top:580px">17.7885</div>
<div class="a" style="left:269px;top:580px;width:71px;height:19px;background:#FFFFFF;border-right:1px solid #EFEFEF;border-bottom:1px solid #EFEFEF"></div>
<div class="cell" style="left:275px;top:580px">Arifin</div>
<div class="a" style="left:340px;top:580px;width:72px;height:19px;background:#B9DBFC;border-right:1px solid #EFEFEF;border-bottom:1px solid #EFEFEF"></div>
<div class="cell" style="left:346px;top:580px">Kharatishvili</div>
<div class="a" style="left:40px;top:599px;width:32px;height:19px;background:#FFFFFF;border-right:1px solid #EFEFEF;border-bottom:1px solid #DCE4EF"></div>
<div class="cell" style="left:46px;top:599px">2</div>
<div class="a" style="left:72px;top:599px;width:29px;height:19px;background:#FFFFFF;border-right:1px solid #EFEFEF;border-bottom:1px solid #EFEFEF"></div>
<div class="cell" style="left:78px;top:599px">2</div>
<div class="a" style="left:101px;top:599px;width:112px;height:19px;background:#FFFFFF;border-right:1px solid #EFEFEF;border-bottom:1px solid #EFEFEF"></div>
<div class="cell" style="left:107px;top:599px">Document Control</div>
<div class="a" style="left:213px;top:599px;width:56px;height:19px;background:#FFFFFF;border-right:1px solid #EFEFEF;border-bottom:1px solid #EFEFEF"></div>
<div class="cell" style="left:219px;top:599px">16.8269</div>
<div class="a" style="left:269px;top:599px;width:71px;height:19px;background:#FFFFFF;border-right:1px solid #EFEFEF;border-bottom:1px solid #EFEFEF"></div>
<div class="cell" style="left:275px;top:599px">Norred</div>
<div class="a" style="left:340px;top:599px;width:72px;height:19px;background:#FFFFFF;border-right:1px solid #EFEFEF;border-bottom:1px solid #EFEFEF"></div>
<div class="cell" style="left:346px;top:599px">Chai</div>
<div class="a" style="left:40px;top:618px;width:32px;height:19px;background:#FFFFFF;border-right:1px solid #EFEFEF;border-bottom:1px solid #DCE4EF"></div>
<div class="cell" style="left:46px;top:618px">3</div>
<div class="a" style="left:72px;top:618px;width:29px;height:19px;background:#FFFFFF;border-right:1px solid #EFEFEF;border-bottom:1px solid #EFEFEF"></div>
<div class="cell" style="left:78px;top:618px">3</div>
<div class="a" style="left:101px;top:618px;width:112px;height:19px;background:#FFFFFF;border-right:1px solid #EFEFEF;border-bottom:1px solid #EFEFEF"></div>
<div class="cell" style="left:107px;top:618px">Document Control</div>
<div class="a" style="left:213px;top:618px;width:56px;height:19px;background:#FFFFFF;border-right:1px solid #EFEFEF;border-bottom:1px solid #EFEFEF"></div>
<div class="cell" style="left:219px;top:618px">16.8269</div>
<div class="a" style="left:269px;top:618px;width:71px;height:19px;background:#B9DBFC;border-right:1px solid #EFEFEF;border-bottom:1px solid #EFEFEF"></div>
<div class="cell" style="left:275px;top:618px">Kharatishvili</div>
<div class="a" style="left:340px;top:618px;width:72px;height:19px;background:#FFFFFF;border-right:1px solid #EFEFEF;border-bottom:1px solid #EFEFEF"></div>
<div class="cell" style="left:346px;top:618px">Berge</div>
<div class="a" style="left:40px;top:637px;width:32px;height:19px;background:#FFFFFF;border-right:1px solid #EFEFEF;border-bottom:1px solid #DCE4EF"></div>
<div class="cell" style="left:46px;top:637px">4</div>
<div class="a" style="left:72px;top:637px;width:29px;height:19px;background:#FFFFFF;border-right:1px solid #EFEFEF;border-bottom:1px solid #EFEFEF"></div>
<div class="cell" style="left:78px;top:637px">4</div>
<div class="a" style="left:101px;top:637px;width:112px;height:19px;background:#FFFFFF;border-right:1px solid #EFEFEF;border-bottom:1px solid #EFEFEF"></div>
<div class="cell" style="left:107px;top:637px">Information Services</div>
<div class="a" style="left:213px;top:637px;width:56px;height:19px;background:#FFFFFF;border-right:1px solid #EFEFEF;border-bottom:1px solid #EFEFEF"></div>
<div class="cell" style="left:219px;top:637px">10.25</div>
<div class="a" style="left:269px;top:637px;width:71px;height:19px;background:#FFFFFF;border-right:1px solid #EFEFEF;border-bottom:1px solid #EFEFEF"></div>
<div class="cell" style="left:275px;top:637px">Chai</div>
<div class="a" style="left:340px;top:637px;width:72px;height:19px;background:#FFFFFF;border-right:1px solid #EFEFEF;border-bottom:1px solid #EFEFEF"></div>
<div class="cell" style="left:346px;top:637px">Trenary</div>
<div class="a" style="left:40px;top:656px;width:32px;height:19px;background:#FFFFFF;border-right:1px solid #EFEFEF;border-bottom:1px solid #DCE4EF"></div>
<div class="cell" style="left:46px;top:656px">5</div>
<div class="a" style="left:72px;top:656px;width:29px;height:19px;background:#FFFFFF;border-right:1px solid #EFEFEF;border-bottom:1px solid #EFEFEF"></div>
<div class="cell" style="left:78px;top:656px">5</div>
<div class="a" style="left:101px;top:656px;width:112px;height:19px;background:#FFFFFF;border-right:1px solid #EFEFEF;border-bottom:1px solid #EFEFEF"></div>
<div class="cell" style="left:107px;top:656px">Information Services</div>
<div class="a" style="left:213px;top:656px;width:56px;height:19px;background:#FFFFFF;border-right:1px solid #EFEFEF;border-bottom:1px solid #EFEFEF"></div>
<div class="cell" style="left:219px;top:656px">10.25</div>
<div class="a" style="left:269px;top:656px;width:71px;height:19px;background:#FFFFFF;border-right:1px solid #EFEFEF;border-bottom:1px solid #EFEFEF"></div>
<div class="cell" style="left:275px;top:656px">Berge</div>
<div class="a" style="left:340px;top:656px;width:72px;height:19px;background:#B9DBFC;border-right:1px solid #EFEFEF;border-bottom:1px solid #EFEFEF"></div>
<div class="cell" style="left:346px;top:656px">Conroy</div>
<div class="a" style="left:40px;top:675px;width:32px;height:19px;background:#FFFFFF;border-right:1px solid #EFEFEF;border-bottom:1px solid #DCE4EF"></div>
<div class="cell" style="left:46px;top:675px">6</div>
<div class="a" style="left:72px;top:675px;width:29px;height:19px;background:#FFFFFF;border-right:1px solid #EFEFEF;border-bottom:1px solid #EFEFEF"></div>
<div class="cell" style="left:78px;top:675px">6</div>
<div class="a" style="left:101px;top:675px;width:112px;height:19px;background:#FFFFFF;border-right:1px solid #EFEFEF;border-bottom:1px solid #EFEFEF"></div>
<div class="cell" style="left:107px;top:675px">Information Services</div>
<div class="a" style="left:213px;top:675px;width:56px;height:19px;background:#FFFFFF;border-right:1px solid #EFEFEF;border-bottom:1px solid #EFEFEF"></div>
<div class="cell" style="left:219px;top:675px">50.4808</div>
<div class="a" style="left:269px;top:675px;width:71px;height:19px;background:#FFFFFF;border-right:1px solid #EFEFEF;border-bottom:1px solid #EFEFEF"></div>
<div class="cell" style="left:275px;top:675px">Trenary</div>
<div class="a" style="left:340px;top:675px;width:72px;height:19px;background:#FFFFFF;border-right:1px solid #EFEFEF;border-bottom:1px solid #EFEFEF"></div>
<div class="cell" style="left:346px;top:675px">Ajenstat</div>
<div class="a" style="left:40px;top:694px;width:32px;height:19px;background:#FFFFFF;border-right:1px solid #EFEFEF;border-bottom:1px solid #DCE4EF"></div>
<div class="cell" style="left:46px;top:694px">7</div>
<div class="a" style="left:72px;top:694px;width:29px;height:19px;background:#FFFFFF;border-right:1px solid #EFEFEF;border-bottom:1px solid #EFEFEF"></div>
<div class="cell" style="left:78px;top:694px">7</div>
<div class="a" style="left:101px;top:694px;width:112px;height:19px;background:#FFFFFF;border-right:1px solid #EFEFEF;border-bottom:1px solid #EFEFEF"></div>
<div class="cell" style="left:107px;top:694px">Information Services</div>
<div class="a" style="left:213px;top:694px;width:56px;height:19px;background:#FFFFFF;border-right:1px solid #EFEFEF;border-bottom:1px solid #EFEFEF"></div>
<div class="cell" style="left:219px;top:694px">39.6635</div>
<div class="a" style="left:269px;top:694px;width:71px;height:19px;background:#B9DBFC;border-right:1px solid #EFEFEF;border-bottom:1px solid #EFEFEF"></div>
<div class="cell" style="left:275px;top:694px">Conroy</div>
<div class="a" style="left:340px;top:694px;width:72px;height:19px;background:#FFFFFF;border-right:1px solid #EFEFEF;border-bottom:1px solid #EFEFEF"></div>
<div class="cell" style="left:346px;top:694px">Wilson</div>
<div class="a" style="left:40px;top:713px;width:32px;height:19px;background:#FFFFFF;border-right:1px solid #EFEFEF;border-bottom:1px solid #DCE4EF"></div>
<div class="cell" style="left:46px;top:713px">8</div>
<div class="a" style="left:72px;top:713px;width:29px;height:19px;background:#FFFFFF;border-right:1px solid #EFEFEF;border-bottom:1px solid #EFEFEF"></div>
<div class="cell" style="left:78px;top:713px">8</div>
<div class="a" style="left:101px;top:713px;width:112px;height:19px;background:#FFFFFF;border-right:1px solid #EFEFEF;border-bottom:1px solid #EFEFEF"></div>
<div class="cell" style="left:107px;top:713px">Information Services</div>
<div class="a" style="left:213px;top:713px;width:56px;height:19px;background:#FFFFFF;border-right:1px solid #EFEFEF;border-bottom:1px solid #EFEFEF"></div>
<div class="cell" style="left:219px;top:713px">38.4615</div>
<div class="a" style="left:269px;top:713px;width:71px;height:19px;background:#FFFFFF;border-right:1px solid #EFEFEF;border-bottom:1px solid #EFEFEF"></div>
<div class="cell" style="left:275px;top:713px">Ajenstat</div>
<div class="a" style="left:340px;top:713px;width:72px;height:19px;background:#FFFFFF;border-right:1px solid #EFEFEF;border-bottom:1px solid #EFEFEF"></div>
<div class="cell" style="left:346px;top:713px">Connelly</div>
<div class="a" style="left:40px;top:732px;width:32px;height:19px;background:#FFFFFF;border-right:1px solid #EFEFEF;border-bottom:1px solid #DCE4EF"></div>
<div class="cell" style="left:46px;top:732px">9</div>
<div class="a" style="left:72px;top:732px;width:29px;height:19px;background:#FFFFFF;border-right:1px solid #EFEFEF;border-bottom:1px solid #EFEFEF"></div>
<div class="cell" style="left:78px;top:732px">9</div>
<div class="a" style="left:101px;top:732px;width:112px;height:19px;background:#FFFFFF;border-right:1px solid #EFEFEF;border-bottom:1px solid #EFEFEF"></div>
<div class="cell" style="left:107px;top:732px">Information Services</div>
<div class="a" style="left:213px;top:732px;width:56px;height:19px;background:#FFFFFF;border-right:1px solid #EFEFEF;border-bottom:1px solid #EFEFEF"></div>
<div class="cell" style="left:219px;top:732px">38.4615</div>
<div class="a" style="left:269px;top:732px;width:71px;height:19px;background:#FFFFFF;border-right:1px solid #EFEFEF;border-bottom:1px solid #EFEFEF"></div>
<div class="cell" style="left:275px;top:732px">Wilson</div>
<div class="a" style="left:340px;top:732px;width:72px;height:19px;background:#FFFFFF;border-right:1px solid #EFEFEF;border-bottom:1px solid #EFEFEF"></div>
<div class="cell" style="left:346px;top:732px">Meyyappan</div>
<div class="a" style="left:40px;top:751px;width:32px;height:19px;background:#FFFFFF;border-right:1px solid #EFEFEF;border-bottom:1px solid #DCE4EF"></div>
<div class="cell" style="left:46px;top:751px">10</div>
<div class="a" style="left:72px;top:751px;width:29px;height:19px;background:#FFFFFF;border-right:1px solid #EFEFEF;border-bottom:1px solid #EFEFEF"></div>
<div class="cell" style="left:78px;top:751px">10</div>
<div class="a" style="left:101px;top:751px;width:112px;height:19px;background:#FFFFFF;border-right:1px solid #EFEFEF;border-bottom:1px solid #EFEFEF"></div>
<div class="cell" style="left:107px;top:751px">Information Services</div>
<div class="a" style="left:213px;top:751px;width:56px;height:19px;background:#FFFFFF;border-right:1px solid #EFEFEF;border-bottom:1px solid #EFEFEF"></div>
<div class="cell" style="left:219px;top:751px">32.4519</div>
<div class="a" style="left:269px;top:751px;width:71px;height:19px;background:#FFFFFF;border-right:1px solid #EFEFEF;border-bottom:1px solid #EFEFEF"></div>
<div class="cell" style="left:275px;top:751px">Connelly</div>
<div class="a" style="left:340px;top:751px;width:72px;height:19px;background:#FFFFFF;border-right:1px solid #EFEFEF;border-bottom:1px solid #EFEFEF"></div>
<div class="cell" style="left:346px;top:751px">0</div>
<div class="a" style="left:40px;top:770px;width:32px;height:19px;background:#FFFFFF;border-right:1px solid #EFEFEF;border-bottom:1px solid #DCE4EF"></div>
<div class="cell" style="left:46px;top:770px">11</div>
<div class="a" style="left:72px;top:770px;width:29px;height:19px;background:#FFFFFF;border-right:1px solid #EFEFEF;border-bottom:1px solid #EFEFEF"></div>
<div class="cell" style="left:78px;top:770px">11</div>
<div class="a" style="left:101px;top:770px;width:112px;height:19px;background:#FFFFFF;border-right:1px solid #EFEFEF;border-bottom:1px solid #EFEFEF"></div>
<div class="cell" style="left:107px;top:770px">Information Services</div>
<div class="a" style="left:213px;top:770px;width:56px;height:19px;background:#FFFFFF;border-right:1px solid #EFEFEF;border-bottom:1px solid #EFEFEF"></div>
<div class="cell" style="left:219px;top:770px">32.4519</div>
<div class="a" style="left:269px;top:770px;width:71px;height:19px;background:#FFFFFF;border-right:1px solid #EFEFEF;border-bottom:1px solid #EFEFEF"></div>
<div class="cell" style="left:275px;top:770px">Meyyappan</div>
<div class="a" style="left:340px;top:770px;width:72px;height:19px;background:#FFFFFF;border-right:1px solid #EFEFEF;border-bottom:1px solid #EFEFEF"></div>
<div class="cell" style="left:346px;top:770px">0</div>
<div class="a" style="left:339px;top:655px;width:73px;height:20px;border:1px dotted #222"></div>
<svg class="a" style="left:300px;top:710px" width="70" height="65"><path d="M12.8 54.3 L61.6 13.4" stroke="#FF9A08" stroke-width="3.8"/></svg>
<div class="a" style="left:35px;top:796px;width:677px;height:26px;background:linear-gradient(#EFE48A 0,#EEE38A 22px,#FCE5A2 22px);border-radius:0 0 3px 3px"></div>
<svg class="a" style="left:38px;top:799px" width="17" height="17"><defs><radialGradient id="gg" cx=".35" cy=".3" r=".8"><stop offset="0" stop-color="#9BE08E"/><stop offset=".5" stop-color="#45A443"/><stop offset="1" stop-color="#2E8A30"/></radialGradient></defs><circle cx="8" cy="8" r="7.6" fill="url(#gg)" stroke="#2C7E2E" stroke-width=".8"/><path d="M3.6 8.6l2.8 2.8l5.2-5.6" stroke="#fff" stroke-width="1.9" fill="none"/></svg>
<div class="txt" style="left:58px;top:801px;font-size:12px;letter-spacing:0px;color:#1A1A1A">Query  exe...</div>
<div class="txt" style="left:135px;top:801px;font-size:12px;letter-spacing:-0.08px;color:#1A1A1A">(LocalDb)\v11.0 (11.0 SP1)</div>
<div class="txt" style="left:285px;top:801px;font-size:12px;letter-spacing:-0.3px;color:#1A1A1A">SSW2000\DorbenZhang (54)</div>
<div class="txt" style="left:446.5px;top:801px;font-size:12px;letter-spacing:0.08px;color:#1A1A1A">aspnet-WebApplication4...</div>
<div class="txt" style="left:599px;top:801px;font-size:12px;letter-spacing:-0.4px;color:#1A1A1A">00:00:00</div>
<div class="txt" style="left:654px;top:801px;font-size:12px;letter-spacing:0.2px;color:#1A1A1A">11 rows</div>
<div class="a" style="left:129px;top:800px;width:1px;height:16px;background:#CFCBD8;box-shadow:1px 0 0 #F8F6EC"></div>
<div class="a" style="left:280px;top:800px;width:1px;height:16px;background:#CFCBD8;box-shadow:1px 0 0 #F8F6EC"></div>
<div class="a" style="left:440px;top:800px;width:1px;height:16px;background:#CFCBD8;box-shadow:1px 0 0 #F8F6EC"></div>
<div class="a" style="left:593px;top:800px;width:1px;height:16px;background:#CFCBD8;box-shadow:1px 0 0 #F8F6EC"></div>
<div class="a" style="left:648px;top:800px;width:1px;height:16px;background:#CFCBD8;box-shadow:1px 0 0 #F8F6EC"></div>
<div class="a" style="left:8px;top:827px;width:731px;height:24px;background:#293752"></div>
<div class="txt" style="left:12px;top:834px;font-size:12px;letter-spacing:-0.35px;color:#F2F2F2">Ready</div>
<div class="txt" style="left:368px;top:834px;font-size:12px;letter-spacing:0px;color:#F2F2F2">Ln 5</div>
<div class="txt" style="left:552.5px;top:834px;font-size:12px;letter-spacing:0px;color:#F2F2F2">Col 5</div>
<div class="txt" style="left:687.5px;top:834px;font-size:12px;letter-spacing:0px;color:#F2F2F2">INS</div>
<svg class="a" style="left:724px;top:837px" width="14" height="13"><g fill="#F2F5FA"><rect x="11" y="1" width="2" height="2"/><rect x="8" y="4" width="2" height="2"/><rect x="11" y="4" width="2" height="2"/><rect x="5" y="7" width="2" height="2"/><rect x="8" y="7" width="2" height="2"/><rect x="11" y="7" width="2" height="2"/><rect x="2" y="10" width="2" height="2"/><rect x="5" y="10" width="2" height="2"/><rect x="8" y="10" width="2" height="2"/><rect x="11" y="10" width="2" height="2"/></g></svg>
<svg class="a" style="left:0;top:0" width="747" height="859"><g fill="#fff"><rect x="0" y="0" width="3" height="1"/><rect x="0" y="1" width="2" height="1"/><rect x="0" y="2" width="1" height="1"/><rect x="744" y="0" width="3" height="1"/><rect x="745" y="1" width="2" height="1"/><rect x="746" y="2" width="1" height="2"/><rect x="0" y="856" width="1" height="3"/><rect x="1" y="857" width="1" height="2"/><rect x="2" y="858" width="2" height="1"/><rect x="746" y="855" width="1" height="4"/><rect x="745" y="856" width="1" height="3"/><rect x="744" y="857" width="1" height="2"/><rect x="743" y="858" width="1" height="1"/></g></svg>
</body></html>
